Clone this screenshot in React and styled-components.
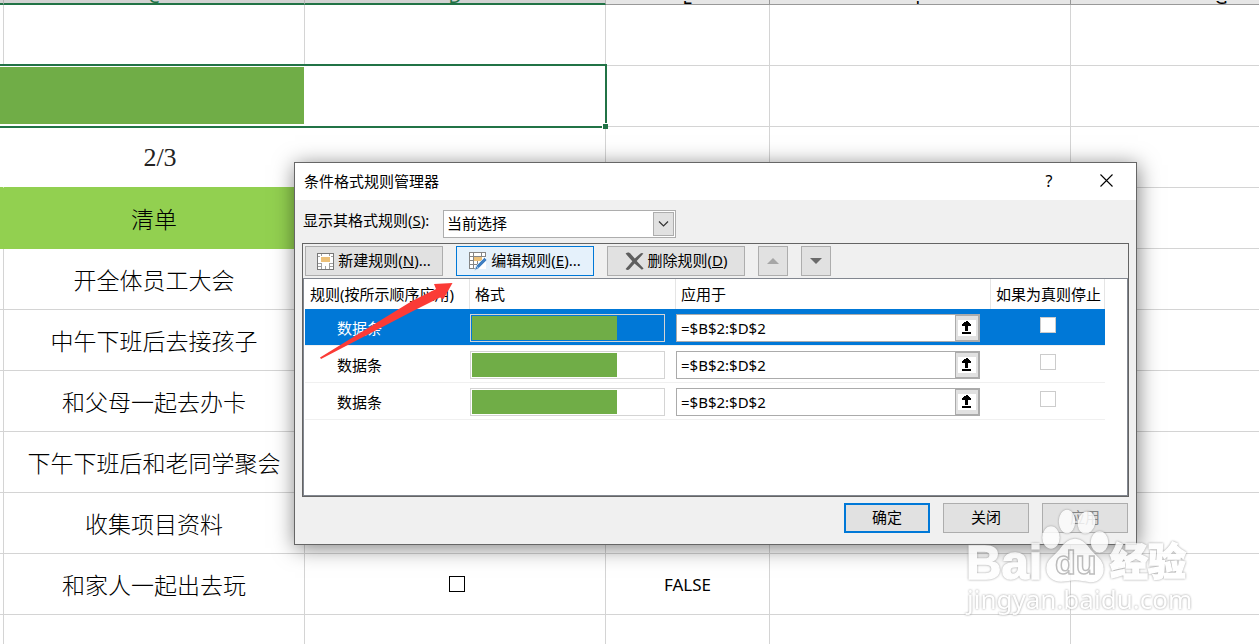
import React, { useState } from "react";
import styled, { createGlobalStyle } from "styled-components";

const GlobalStyle = createGlobalStyle`
  * {
    box-sizing: border-box;
  }

  body {
    margin: 0;
    background: #fff;
    color: #000;
    font-family: "Noto Sans", "Noto Sans CJK SC", sans-serif;
    font-size: 15px;
  }

  button, input, select {
    font: inherit;
    color: inherit;
    margin: 0;
  }
`;

const Page = styled.main`
  position: relative;
  height: 100vh;
  overflow: hidden;
`;

/* worksheet */

const Sheet = styled.table`
  width: 100%;
  min-width: 1372px;
  table-layout: fixed;
  border-collapse: separate;
  border-spacing: 0;
`;

const Col = styled.col`
  width: ${(props) => props.$width};
`;

const HeadCell = styled.th`
  height: 5px;
  padding: 0;
  background: ${(props) => (props.$selected ? "#d2d2d2" : "#e6e6e6")};
  border-right: 1px solid ${(props) => (props.$selected ? "#b4b4b4" : "#999")};
  border-bottom: ${(props) => (props.$selected ? "2px solid #217346" : "1px solid #999")};
`;

const HeadLabel = styled.div`
  display: flex;
  align-items: flex-end;
  justify-content: center;
  height: 3px;
  overflow: hidden;
  line-height: 14px;
  font-size: 18px;
  font-weight: 400;
  color: ${(props) => (props.$selected ? "#217346" : "#000")};
`;

const Cell = styled.td`
  height: 61px;
  padding: 0;
  text-align: center;
  white-space: nowrap;
  border-right: 1px solid ${(props) => (props.$open ? "transparent" : "#d4d4d4")};
  border-bottom: 1px solid ${(props) => (props.$open ? "#92d050" : "#d4d4d4")};
`;

const CheckCell = styled(Cell)`
  padding: 0 0 3px 4px;
`;

const TaskCell = styled(Cell)`
  font-family: "Noto Sans CJK SC", sans-serif;
  font-size: 23px;
  font-weight: 300;
`;

const RatioCell = styled(TaskCell)`
  padding: 2px 0 0 12px;
  font-family: "Liberation Serif", serif;
  font-size: 26px;
  color: #222;
`;

const TitleCell = styled(TaskCell)`
  background: #92d050;
  border-color: #92d050;
`;

const BarCell = styled.td`
  height: 61px;
  padding: 0;
`;

const Selection = styled.div`
  position: relative;
  height: 64px;
  margin: -2px -1px -1px 0;
  padding: 1px 0 2px;
  border: solid #217346;
  border-width: 2px 2px 2px 0;
  background: #fff;
`;

const DataBar = styled.div`
  width: 304px;
  height: 100%;
  background: #70ad47;
`;

const FillHandle = styled.span`
  position: absolute;
  right: -3px;
  bottom: -3px;
  width: 6px;
  height: 6px;
  background: #217346;
  border: solid #fff;
  border-width: 1px 0 0 1px;
`;

const CellCheck = styled.input.attrs({ type: "checkbox" })`
  appearance: none;
  width: 16px;
  height: 16px;
  border: 1px solid #000;
  background: #fff;
  vertical-align: middle;
`;

const Result = styled.span`
  font-size: 17px;
`;

/* dialog */

const Dialog = styled.section`
  position: absolute;
  left: 294px;
  top: 162px;
  width: 843px;
  background: #f0f0f0;
  border: 1px solid #666;
  box-shadow: 1px 3px 20px rgba(0, 0, 0, 0.5);
`;

const TitleBar = styled.header`
  display: flex;
  height: 37px;
  padding-left: 9px;
  background: #fff;
`;

const Title = styled.h1`
  flex: 1;
  margin: 0;
  font-size: 15px;
  font-weight: 400;
  line-height: 36px;
`;

const TitleButton = styled.button`
  display: flex;
  align-items: center;
  justify-content: center;
  width: ${(props) => props.$width};
  padding: 0 0 2px;
  border: none;
  background: none;
  font-size: 16px;
`;

const DialogBody = styled.div`
  padding: 10px 7px 11px;
`;

const ScopeRow = styled.div`
  display: flex;
  margin-bottom: 5px;
`;

const ScopeLabel = styled.label`
  flex: 0 0 141px;
  padding-left: 1px;
  line-height: 20px;
`;

const SelectWrap = styled.div`
  position: relative;
  width: 233px;
`;

const Select = styled.select`
  display: block;
  appearance: none;
  width: 100%;
  height: 28px;
  padding: 0 26px 2px 3px;
  border: 1px solid #adadad;
  border-radius: 0;
  background: #fff;
`;

const SelectArrow = styled.span`
  position: absolute;
  top: 2px;
  right: 2px;
  display: flex;
  align-items: center;
  justify-content: center;
  width: 21px;
  height: 24px;
  border: 1px solid #adadad;
  background: #e1e1e1;
  pointer-events: none;
`;

const Frame = styled.div`
  border: 1px solid #646464;
`;

const Toolbar = styled.div`
  display: flex;
  gap: 13px;
  padding: 2px;
`;

const Button = styled.button`
  display: flex;
  align-items: center;
  justify-content: center;
  gap: 4px;
  width: ${(props) => props.$width};
  height: 30px;
  padding: 0;
  border: 1px solid #adadad;
  background: #e1e1e1;
  line-height: 20px;
  white-space: nowrap;

  &:disabled {
    color: #838383;
  }
`;

const ButtonText = styled.span`
  padding-bottom: 2px;
`;

const ActiveButton = styled(Button)`
  border-color: #0078d7;
  background: #e5f1fb;
`;

const DefaultButton = styled(Button)`
  border: 2px solid #0078d7;
`;

const RuleList = styled.div`
  height: 218px;
  padding-left: 1px;
  padding-right: 22px;
  border: 1px solid #828790;
  background: #fff;
`;

const RuleTable = styled.table`
  width: 100%;
  table-layout: fixed;
  border-collapse: separate;
  border-spacing: 0;
`;

const RuleHead = styled.th`
  height: 30px;
  padding: 0 0 2px 5px;
  border-right: 1px solid #e5e5e5;
  font-weight: 400;
  text-align: left;
  white-space: nowrap;
`;

const RuleRow = styled.tr`
  background: ${(props) => (props.$selected ? "#0078d7" : "#fff")};
  background-clip: padding-box;
  color: ${(props) => (props.$selected ? "#fff" : "#000")};
`;

const RuleCell = styled.td`
  height: 37px;
  padding: ${(props) => props.$padding || "0"};
  border-bottom: 1px solid #f0f0f0;
  background-clip: padding-box;
`;

const Preview = styled.div`
  width: 195px;
  height: 28px;
  margin-top: 2px;
  padding: 1px;
  border: 1px solid #d4d4d4;
`;

const PreviewBar = styled.div`
  width: 145px;
  height: 100%;
  background: #70ad47;
`;

const RangeField = styled.div`
  display: flex;
  width: 304px;
  height: 28px;
  margin-top: 2px;
  border: 1px solid #ababab;
  background: #fff;
  color: #000;
`;

const RangeInput = styled.input`
  flex: 1;
  min-width: 0;
  padding: 0 4px;
  border: none;
  background: none;
  outline: none;
`;

const PickButton = styled.button`
  width: 24px;
  padding: 0;
  border: 1px solid #ababab;
  background: #e1e1e1;
  line-height: 0;
`;

const StopCheck = styled.input.attrs({ type: "checkbox" })`
  display: block;
  appearance: none;
  width: 16px;
  height: 16px;
  margin: 0 auto;
  border: 1px solid #ccc;
  background: #fff;
`;

const Actions = styled.footer`
  display: flex;
  justify-content: flex-end;
  gap: 13px;
  margin-top: 6px;
  padding-right: 1px;
`;

const Arrow = styled.svg`
  position: absolute;
  left: 318px;
  top: 280px;
  pointer-events: none;
`;

const Watermark = styled.svg`
  position: absolute;
  left: 960px;
  top: 505px;
  opacity: 0.82;
  filter: drop-shadow(0 0 1px #888);
  pointer-events: none;
`;

const NewIcon = () => (
  <svg width="17" height="17" viewBox="0 0 17 17" shapeRendering="crispEdges" aria-hidden="true">
    <rect x="0.5" y="0.5" width="16" height="16" fill="#fff" stroke="#777" />
    <path d="M4.5 1v2M12.5 1v2M4.5 10v6M12.5 10v6M8.5 13v3M1 3.5h2M1 10.5h4M12 10.5h4M1 13.5h3M13 13.5h3M14 3.5h2" stroke="#a0a0a0" />
    <rect x="4" y="4" width="9" height="5" fill="#ecc078" />
  </svg>
);

const EditIcon = () => (
  <svg width="18" height="19" viewBox="0 0 18 19" aria-hidden="true">
    <g shapeRendering="crispEdges">
      <rect x="0.5" y="0.5" width="16" height="16" fill="#fff" />
      <path d="M9 16.5H0.5V0.5h16V5M4.5 1v15M12.5 1v4M1 4.5h15M1 8.5h11M1 12.5h8M8.5 9v7" fill="none" stroke="#858585" />
      <rect x="5" y="5" width="8" height="4" fill="#ecc078" />
    </g>
    <path d="M5.5 18.5l1.5-4.5 8.500-8.500 2.500 2.500-8.500 8.500z" fill="#3f7fc1" stroke="#e5f1fb" strokeWidth="0.7" />
    <path d="M7.400 14.200l2 2" stroke="#d5e6f5" strokeWidth="0.8" />
  </svg>
);

const DeleteIcon = () => (
  <svg width="19" height="19" viewBox="0 0 19 19" aria-hidden="true">
    <path
      d="M.6 1.6C3-.1 4.500.6 5.800 2L9.800 6.600 15.200 1.700C16.500.8 17.500 1 18.400 1.600L11.700 8.900 18.600 16.600 16.900 17.700 9.500 11.500 4.600 17C3.300 18.400 1.800 18.200.6 17L7.300 9.200z"
      fill="#5e5e5e"
    />
  </svg>
);

const PickIcon = () => (
  <svg width="18" height="16" viewBox="0 0 18 16" shapeRendering="crispEdges" aria-hidden="true">
    <path d="M0 0h18v16H0z" fill="#fff" />
    <path d="M8 1h2v1h1v1h1v1h1v2h-3v5H7V6H4V4h1V3h1V2h2zM4 12h9v2H4z" fill="#000" />
  </svg>
);

const columns = [
  { name: "B", width: "4px", selected: true },
  { name: "C", width: "301px", selected: true },
  { name: "D", width: "301px", selected: true },
  { name: "E", width: "164px" },
  { name: "F", width: "301px" },
  { name: "G", width: "auto" },
];

const tasks = [
  "开全体员工大会",
  "中午下班后去接孩子",
  "和父母一起去办卡",
  "下午下班后和老同学聚会",
  "收集项目资料",
  "和家人一起出去玩",
];

const rules = [1, 2, 3];

const EmptyCells = ({ count }) =>
  Array.from({ length: count }, (_, i) => <Cell key={i} />);

const Worksheet = () => (
  <Sheet>
    <colgroup>
      {columns.map((column) => (
        <Col key={column.name} $width={column.width} />
      ))}
    </colgroup>
    <thead>
      <tr>
        {columns.map((column) => (
          <HeadCell key={column.name} $selected={column.selected}>
            <HeadLabel $selected={column.selected}>{column.name !== "B" && column.name}</HeadLabel>
          </HeadCell>
        ))}
      </tr>
    </thead>
    <tbody>
      <tr>
        <EmptyCells count={6} />
      </tr>
      <tr>
        <BarCell colSpan={3}>
          <Selection>
            <DataBar />
            <FillHandle />
          </Selection>
        </BarCell>
        <EmptyCells count={3} />
      </tr>
      <tr>
        <Cell $open />
        <RatioCell $open>2/3</RatioCell>
        <EmptyCells count={4} />
      </tr>
      <tr>
        <TitleCell />
        <TitleCell>清单</TitleCell>
        <TitleCell />
        <EmptyCells count={3} />
      </tr>
      {tasks.map((task, index) => (
        <tr key={task}>
          <Cell />
          <TaskCell>{task}</TaskCell>
          <CheckCell>{index === tasks.length - 1 && <CellCheck aria-label={task} />}</CheckCell>
          <Cell>{index === tasks.length - 1 && <Result>FALSE</Result>}</Cell>
          <EmptyCells count={2} />
        </tr>
      ))}
      <tr>
        <EmptyCells count={6} />
      </tr>
    </tbody>
  </Sheet>
);

const RuleManager = () => {
  const [selected, setSelected] = useState(1);

  return (
    <Dialog role="dialog" aria-labelledby="dialog-title">
      <TitleBar>
        <Title id="dialog-title">条件格式规则管理器</Title>
        <TitleButton $width="54px">?</TitleButton>
        <TitleButton $width="60px" aria-label="关闭">
          <svg width="13" height="13" viewBox="0 0 13 13">
            <path d="M0.5 0.5l12 12M12.5 0.5l-12 12" stroke="#000" strokeWidth="1.1" />
          </svg>
        </TitleButton>
      </TitleBar>
      <DialogBody>
        <ScopeRow>
          <ScopeLabel htmlFor="scope">
            显示其格式规则(<u>S</u>):
          </ScopeLabel>
          <SelectWrap>
            <Select id="scope">
              <option>当前选择</option>
            </Select>
            <SelectArrow>
              <svg width="11" height="6" viewBox="0 0 11 6">
                <path d="M1 0.5l4.500 4.500L10 0.5" fill="none" stroke="#333" strokeWidth="1.2" />
              </svg>
            </SelectArrow>
          </SelectWrap>
        </ScopeRow>
        <Frame>
          <Toolbar>
            <Button $width="138px">
              <NewIcon />
              <ButtonText>新建规则(<u>N</u>)...</ButtonText>
            </Button>
            <ActiveButton $width="138px">
              <EditIcon />
              <ButtonText>编辑规则(<u>E</u>)...</ButtonText>
            </ActiveButton>
            <Button $width="138px">
              <DeleteIcon />
              <ButtonText>删除规则(<u>D</u>)</ButtonText>
            </Button>
            <Button $width="30px" aria-label="上移" disabled>
              <svg width="12" height="6" viewBox="0 0 12 6">
                <path d="M0 6l6-6 6 6z" fill="#a6a6a6" />
              </svg>
            </Button>
            <Button $width="30px" aria-label="下移">
              <svg width="12" height="6" viewBox="0 0 12 6">
                <path d="M0 0h12l-6 6z" fill="#6a6a6a" />
              </svg>
            </Button>
          </Toolbar>
          <RuleList>
            <RuleTable>
              <colgroup>
                <Col $width="165px" />
                <Col $width="206px" />
                <Col $width="auto" />
                <Col $width="114px" />
              </colgroup>
              <thead>
                <tr>
                  <RuleHead>规则(按所示顺序应用)</RuleHead>
                  <RuleHead>格式</RuleHead>
                  <RuleHead>应用于</RuleHead>
                  <RuleHead>如果为真则停止</RuleHead>
                </tr>
              </thead>
              <tbody>
                {rules.map((rule) => (
                  <RuleRow key={rule} $selected={rule === selected} onClick={() => setSelected(rule)}>
                    <RuleCell $padding="0 0 0 32px">数据条</RuleCell>
                    <RuleCell>
                      <Preview>
                        <PreviewBar />
                      </Preview>
                    </RuleCell>
                    <RuleCell>
                      <RangeField>
                        <RangeInput defaultValue="=$B$2:$D$2" aria-label="应用于" />
                        <PickButton aria-label="选择区域">
                          <PickIcon />
                        </PickButton>
                      </RangeField>
                    </RuleCell>
                    <RuleCell $padding="0 0 4px">
                      <StopCheck aria-label="如果为真则停止" />
                    </RuleCell>
                  </RuleRow>
                ))}
              </tbody>
            </RuleTable>
          </RuleList>
        </Frame>
        <Actions>
          <DefaultButton $width="86px">
            <ButtonText>确定</ButtonText>
          </DefaultButton>
          <Button $width="86px">
            <ButtonText>关闭</ButtonText>
          </Button>
          <Button $width="86px" disabled>
            <ButtonText>应用</ButtonText>
          </Button>
        </Actions>
      </DialogBody>
    </Dialog>
  );
};

const App = () => {
  return (
    <Page>
      <GlobalStyle />
      <Worksheet />
      <RuleManager />
      <Arrow width="136" height="82" viewBox="318 280 136 82" aria-hidden="true">
        <path d="M320 357.5L412 301L436 289L434 284L452.5 283L443.5 299L440 297.5L413 311L321 359z" fill="#fb3b36" />
      </Arrow>
      <Watermark width="240" height="115" viewBox="960 505 240 115">
        <g fill="#fff" stroke="#fff" strokeWidth="1.4">
          <text x="966" y="579" fontFamily="Liberation Sans, sans-serif" fontWeight="700" fontSize="49">Bai</text>
          <ellipse cx="1051" cy="537.5" rx="8" ry="10.5" />
          <ellipse cx="1067" cy="521.5" rx="7.5" ry="11" />
          <ellipse cx="1086.5" cy="522.5" rx="8" ry="10.5" transform="rotate(12 1086.5 522.5)" />
          <ellipse cx="1099.5" cy="542" rx="8" ry="10" />
          <path d="M1075 539.5C1082 539.5 1086 544 1090 550C1095 556 1103 560 1103 569C1103 577 1097 582 1090 581.5C1085 581 1080 579.5 1075 579.5C1070 579.5 1066 581 1061 581C1053 581 1047 576 1047 568C1047 560 1055 556 1060 550C1064 544 1068 539.5 1075 539.5z" />
          <text x="1110" y="575" fontFamily="Noto Sans CJK SC, sans-serif" fontWeight="900" fontSize="38">经验</text>
        </g>
        <text x="1055" y="574" fontFamily="Liberation Sans, sans-serif" fontWeight="700" fontSize="34" fill="#fff" stroke="#b0b0b0" strokeWidth="1.5">du</text>
        <text x="967" y="609" fontFamily="Noto Sans, sans-serif" fontSize="26" fill="#fff">jingyan.baidu.com</text>
      </Watermark>
    </Page>
  );
};

export default App;
